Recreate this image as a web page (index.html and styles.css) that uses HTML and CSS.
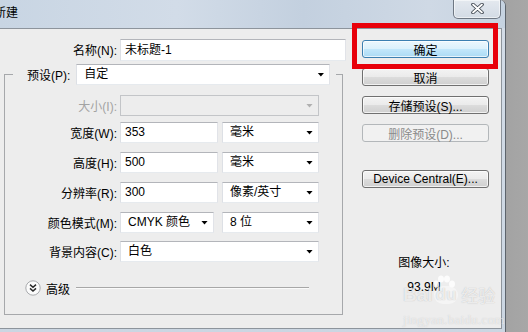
FILE: index.html
```html
<!DOCTYPE html>
<html lang="zh-CN">
<head>
<meta charset="utf-8">
<title>新建</title>
<link rel="stylesheet" href="styles.css">
</head>
<body>
<div class="screen">
  <div class="window">
    <div class="titlebar">
      <span class="title">新建</span>
      <div class="close">
        <svg width="13" height="11" viewBox="0 0 13 11">
          <path d="M2 1.5 L11 9.5 M11 1.5 L2 9.5" stroke="#3b434d" stroke-width="3.6" stroke-linecap="round" fill="none"/>
          <path d="M2 1.5 L11 9.5 M11 1.5 L2 9.5" stroke="#ffffff" stroke-width="1.8" stroke-linecap="round" fill="none"/>
        </svg>
      </div>
    </div>
    <div class="frame">
      <div class="client">
        <div class="form">
          <div class="row">
            <span class="lbl lbl-top">名称(N):</span>
            <div class="field f-name">未标题-1</div>
          </div>
          <fieldset class="group">
            <legend class="legend">
              <div class="legend-inner">
                <span class="legend-lbl">预设(P):</span>
                <div class="combo c-preset"><span>自定</span></div>
              </div>
            </legend>
            <div class="row r-size">
              <span class="lbl lbl-disabled">大小(I):</span>
              <div class="combo c-wide combo-disabled"><span></span></div>
            </div>
            <div class="row r-first">
              <span class="lbl">宽度(W):</span>
              <div class="field f-num">353</div>
              <div class="combo c-unit"><span>毫米</span></div>
            </div>
            <div class="row">
              <span class="lbl">高度(H):</span>
              <div class="field f-num">500</div>
              <div class="combo c-unit"><span>毫米</span></div>
            </div>
            <div class="row">
              <span class="lbl">分辨率(R):</span>
              <div class="field f-num">300</div>
              <div class="combo c-unit"><span>像素/英寸</span></div>
            </div>
            <div class="row">
              <span class="lbl">颜色模式(M):</span>
              <div class="combo c-mode"><span>CMYK 颜色</span></div>
              <div class="combo c-bits"><span>8 位</span></div>
            </div>
            <div class="row r-bg">
              <span class="lbl">背景内容(C):</span>
              <div class="combo c-wide"><span>白色</span></div>
            </div>
            <div class="advanced">
              <svg class="adv-icon" width="16" height="16" viewBox="0 0 16 16">
                <circle cx="8" cy="8" r="7.2" fill="#fbfbfb" stroke="#a9abae" stroke-width="1"/>
                <path d="M5 4.6 L8 7.2 L11 4.6 M5 8.4 L8 11 L11 8.4" stroke="#2b2b2b" stroke-width="1.5" fill="none"/>
              </svg>
              <span class="adv-text">高级</span>
              <span class="adv-line"></span>
            </div>
          </fieldset>
        </div>
        <div class="side">
          <div class="btn btn-default">确定</div>
          <div class="btn">取消</div>
          <div class="btn">存储预设(S)...</div>
          <div class="btn btn-disabled">删除预设(D)...</div>
          <div class="btn btn-device">Device Central(E)...</div>
          <div class="imgsize">图像大小:</div>
          <div class="imgsize-val">93.9M</div>
        </div>
      </div>
    </div>
  </div>
  <div class="redbox"></div>
  <div class="watermark">
    <div class="wm-logo">
      <span>Bai</span>
      <span class="wm-paw">
        <svg class="wm-toes" width="24" height="14" viewBox="0 0 24 14">
          <ellipse cx="4" cy="9" rx="3" ry="3.5" fill="rgba(255,255,255,0.8)"/>
          <ellipse cx="9" cy="4" rx="3" ry="3.5" fill="rgba(255,255,255,0.8)"/>
          <ellipse cx="15" cy="4" rx="3" ry="3.5" fill="rgba(255,255,255,0.8)"/>
          <ellipse cx="20" cy="9" rx="3" ry="3.5" fill="rgba(255,255,255,0.8)"/>
        </svg>
        <span class="wm-du">du</span>
      </span>
      <span class="wm-cn">经验</span>
    </div>
    <div class="wm-url">jingyan.baidu.com</div>
  </div>
</div>
</body>
</html>
```

FILE: styles.css
```css
* { box-sizing: border-box; }
html, body { margin: 0; padding: 0; }
body {
  width: 528px;
  height: 332px;
  overflow: hidden;
  font: 12px "Liberation Sans", "Noto Sans CJK SC", sans-serif;
  color: #000;
  background: #a4a4a4;
}
.screen {
  position: relative;
  width: 528px;
  height: 332px;
  display: flex;
  background: linear-gradient(to right, #8e8e8e 0, #a3a3a3 506px, #a7a7a7 528px);
}
.window {
  width: 506px;
  height: 332px;
  display: flex;
  flex-direction: column;
  background: #d0dae5;
  border-right: 1px solid #5d646c;
  border-top-right-radius: 6px;
}
.titlebar {
  height: 28px;
  display: flex;
  justify-content: space-between;
  align-items: center;
  background: linear-gradient(to right, #c8d5e3 0%, #d2dce8 35%, #c3d0df 60%, #cfd9e5 85%, #c6d3e1 100%);
  border-top-right-radius: 6px;
}
.title {
  margin-left: -6px;
  font-size: 12px;
  line-height: 16px;
  margin-top: -2px;
}
.close {
  align-self: flex-start;
  width: 48px;
  height: 19px;
  margin-right: 4px;
  display: flex;
  align-items: center;
  justify-content: center;
  border: 1px solid #6e7783;
  border-top: none;
  border-radius: 0 0 5px 5px;
  background: linear-gradient(#e4e9ef, #d3dbe5);
  box-shadow: inset 0 0 0 1px rgba(255,255,255,0.55);
}
.close svg { margin-top: -1px; }
.frame {
  flex: 1;
  display: flex;
  padding: 0 3px 3px 0;
  background: linear-gradient(#d3dce7, #cbd6e2);
}
.client {
  flex: 1;
  display: flex;
  background: #ededed;
  border: 1px solid #8d949c;
  border-left: none;
}
.form {
  width: 350px;
  padding-top: 10px;
}
.row {
  display: flex;
  align-items: center;
  height: 21px;
}
.lbl {
  width: 112px;
  margin-right: 3px;
  text-align: right;
  white-space: nowrap;
}
.lbl-top { width: 117px; }
.lbl-disabled { color: #a3a3a3; }
.field, .combo {
  height: 21px;
  background: #fff;
  border: 1px solid;
  border-color: #b3b5ba #e1e3e8 #e6eaee #dde0e5;
  line-height: 19px;
  white-space: nowrap;
}
.field { padding-left: 4px; }
.f-name { width: 226px; height: 22px; line-height: 20px; }
.f-num { width: 98px; }
.combo {
  display: flex;
  align-items: center;
  justify-content: space-between;
  padding: 0 5px 0 7px;
}
.combo::after {
  content: "";
  width: 7px;
  height: 4px;
  background: #000;
  clip-path: polygon(0 0, 100% 0, 50% 100%);
}
.combo-disabled {
  background: #ededed;
  border-color: #c3c5c8;
}
.combo-disabled::after { background: #b0b0b0; }
.c-unit { width: 97px; margin-left: 4px; }
.c-mode { width: 94px; }
.c-bits { width: 97px; margin-left: 8px; }
.c-wide { width: 199px; }
.c-preset { width: 254px; }
.group {
  width: 339px;
  margin: 4px 0 0 4px;
  padding: 0 0 18px 0;
  border: 1px solid #a6a8ab;
  min-width: 0;
}
.legend {
  margin-left: 8px;
  padding: 0 6px 0 14px;
}
.legend-inner {
  display: flex;
  align-items: center;
  height: 21px;
}
.legend-lbl { margin-right: 6px; }
.r-size { margin-top: 10px; }
.row + .row { margin-top: 9px; }
.row.r-first { margin-top: 6px; }
.row.r-bg { margin-top: 8px; }
.advanced {
  display: flex;
  align-items: center;
  height: 16px;
  margin-top: 18px;
  padding-left: 20px;
}
.adv-icon { flex: none; }
.adv-text { margin-left: 5px; }
.adv-line {
  width: 233px;
  margin-left: 6px;
  height: 2px;
  border-top: 1px solid #a7a7a7;
  border-bottom: 1px solid #fafafa;
}
.side {
  display: flex;
  flex-direction: column;
  padding: 11px 0 0 12px;
}
.btn {
  width: 127px;
  height: 18px;
  display: flex;
  align-items: center;
  justify-content: center;
  border: 1px solid #707070;
  border-radius: 3px;
  background: linear-gradient(#f3f3f3 0%, #ebebeb 48%, #dcdcdc 52%, #cfcfcf 100%);
  box-shadow: inset 0 0 0 1px rgba(255,255,255,0.7);
  white-space: nowrap;
}
.btn + .btn { margin-top: 10px; }
.btn-default {
  border-color: #3c7fb1;
  background: linear-gradient(#ecf7fd 0%, #dcf1fc 48%, #c2e7fb 52%, #abdaf4 100%);
}
.btn-disabled {
  color: #8a8a8a;
  border-color: #b3b7ba;
  background: #f1f1f1;
  box-shadow: none;
}
.btn.btn-device { margin-top: 28px; }
.imgsize {
  width: 127px;
  text-align: center;
  line-height: 16px;
  margin-top: 67px;
  padding-right: 3px;
}
.imgsize-val {
  width: 127px;
  text-align: center;
  line-height: 16px;
  margin-top: 8px;
  padding-right: 3px;
}
.redbox {
  position: absolute;
  left: 352px;
  top: 23px;
  width: 146px;
  height: 46px;
  border: 5px solid #e8000a;
}
.watermark {
  position: absolute;
  left: 403px;
  top: 280px;
  width: 96px;
  pointer-events: none;
}
.wm-logo {
  display: flex;
  align-items: flex-end;
  height: 24px;
  font: bold 19px "Liberation Sans", sans-serif;
  color: rgba(255,255,255,0.72);
  text-shadow: 0 0 1px rgba(110,110,110,0.45);
  line-height: 18px;
}
.wm-paw {
  position: relative;
  display: inline-flex;
  flex-direction: column;
  align-items: center;
  margin-left: 1px;
}
.wm-toes { position: absolute; top: -11px; left: -2px; }
.wm-du {
  font-size: 17px;
  padding: 0 2px;
  border-radius: 9px;
  background: rgba(255,255,255,0.45);
}
.wm-cn {
  margin-left: 3px;
  font: 17px "Noto Sans CJK SC", sans-serif;
  line-height: 18px;
}
.wm-url {
  margin-top: 8px;
  font: 13px "Liberation Serif", serif;
  color: rgba(255,255,255,0.6);
  text-shadow: 0 0 1px rgba(120,120,120,0.35);
  letter-spacing: 0.3px;
}
```
